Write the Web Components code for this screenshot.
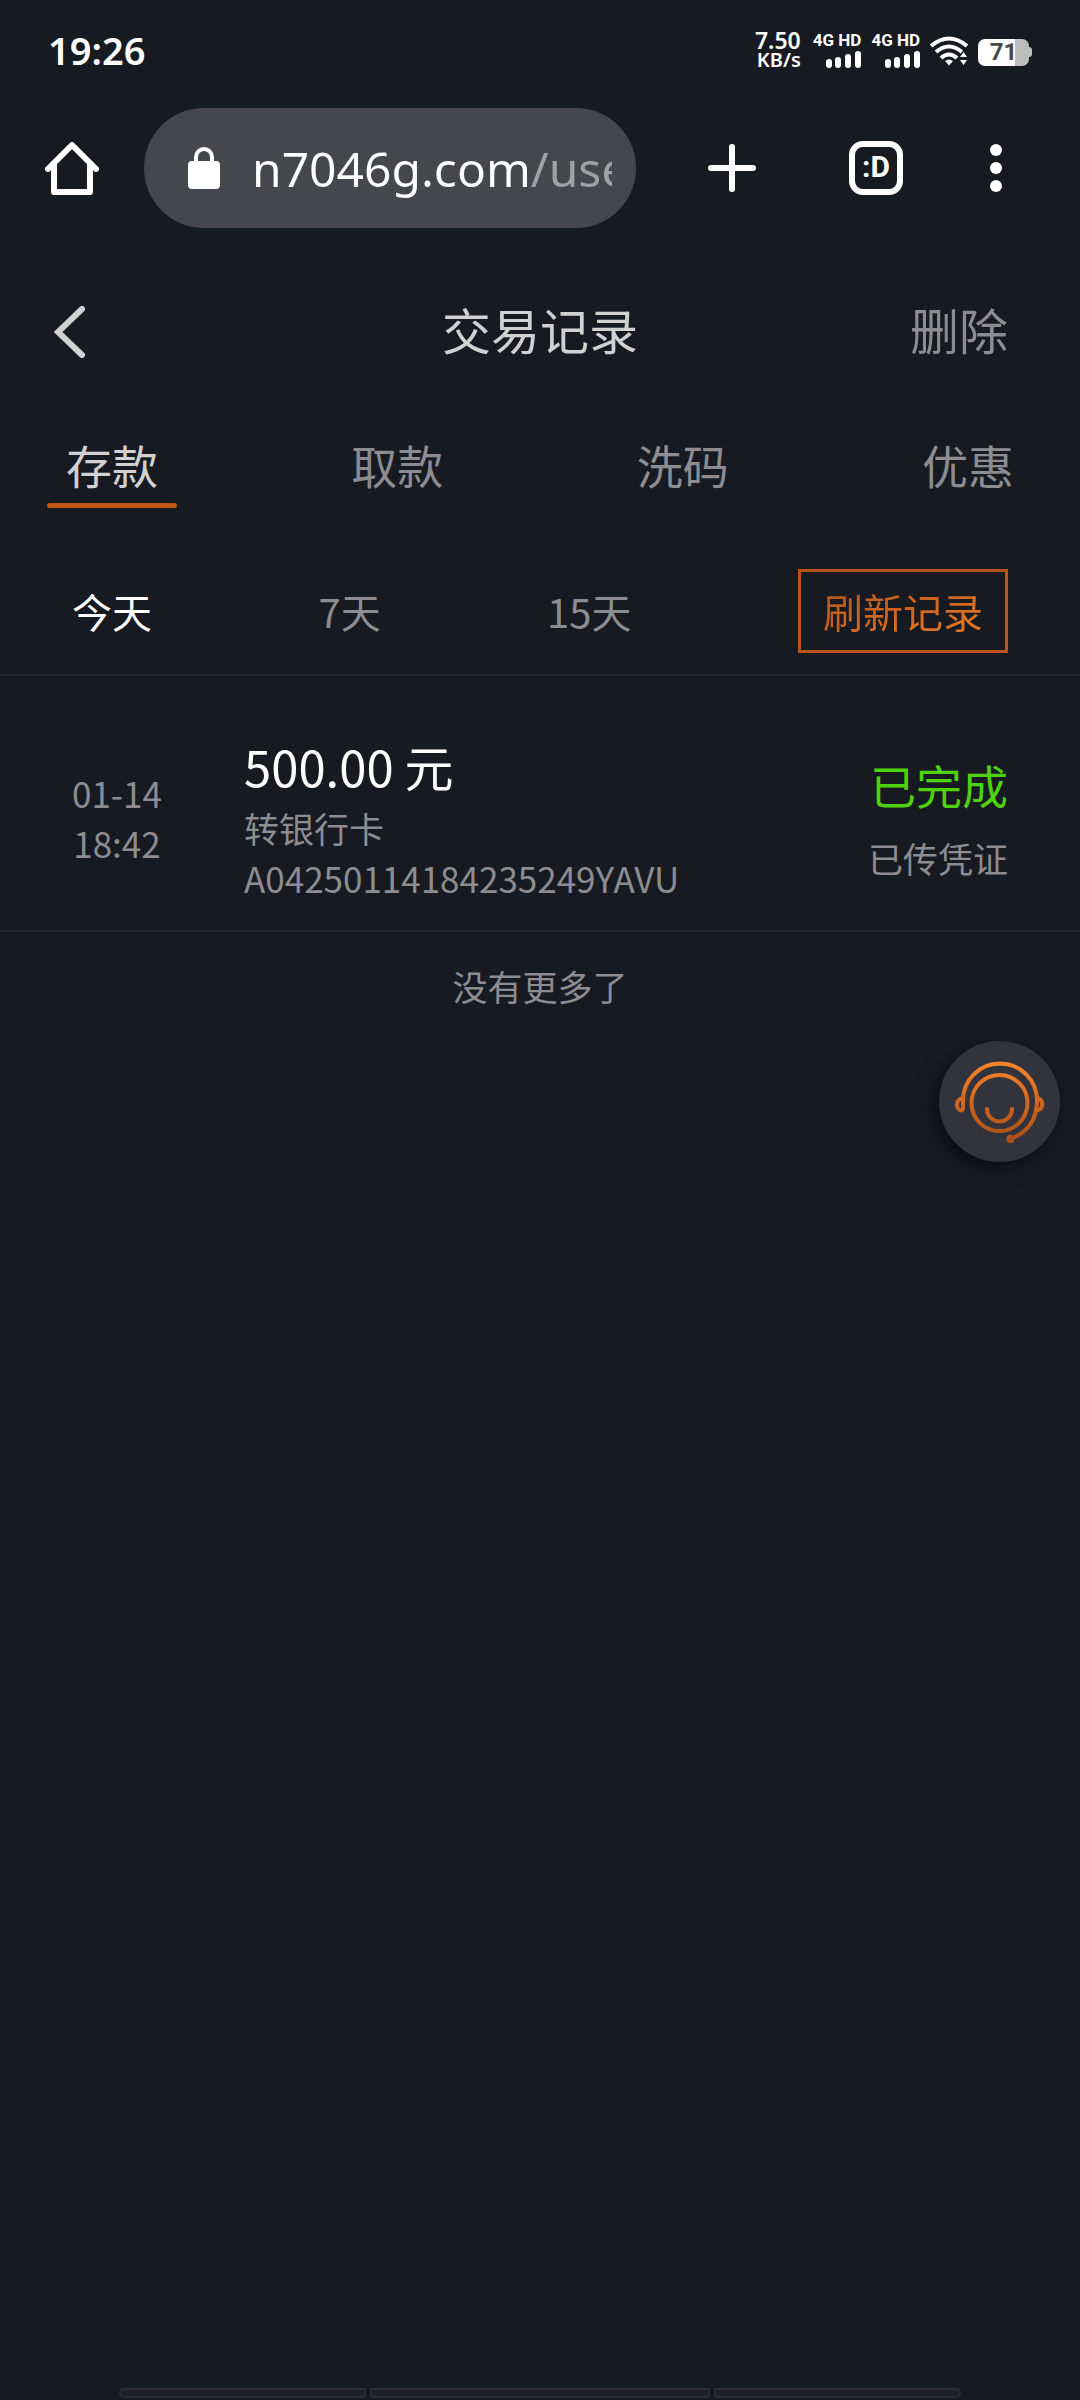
<!DOCTYPE html>
<html lang="zh-CN">
<head>
<meta charset="utf-8">
<meta name="viewport" content="width=device-width, initial-scale=1">
<title>交易记录</title>
<style>
  :root {
    --bg: #181a22;
    --text: #d1d1d1;
    --muted: #8c8c91;
    --line: #262a32;
    --accent: #c25613;
    --ok: #4fd20e;
  }
  html, body {
    margin: 0;
    background: var(--bg);
  }
  body {
    min-height: 100vh;
    display: flex;
    flex-direction: column;
    color: var(--text);
    font-family: "Noto Sans CJK SC", sans-serif;
  }
</style>
</head>
<body>
<status-bar time="19:26" battery="71"></status-bar>
<browser-bar url="n7046g.com/user"></browser-bar>
<page-nav>交易记录<span slot="action">删除</span></page-nav>
<record-tabs items="存款,取款,洗码,优惠"></record-tabs>
<day-filter items="今天,7天,15天">刷新记录</day-filter>
<record-row date="01-14" time="18:42">
  <span slot="amount">500.00 元</span>
  <span slot="method">转银行卡</span>
  <span slot="order">A04250114184235249YAVU</span>
  <span slot="status">已完成</span>
  <span slot="proof">已传凭证</span>
</record-row>
<list-end>没有更多了</list-end>
<bottom-handle></bottom-handle>
<service-button></service-button>

<script>
  const RESET = `
    button {
      margin: 0; padding: 0; border: 0; background: none;
      color: inherit; font: inherit; cursor: pointer;
    }
    svg { display: block; }
  `;

  class BaseElement extends HTMLElement {
    connectedCallback() {
      if (this.shadowRoot) return;
      this.attachShadow({ mode: 'open' });
      this.shadowRoot.innerHTML = `<style>${RESET}</style>${this.render()}`;
    }
    list(name) {
      return (this.getAttribute(name) || '').split(',');
    }
  }

  // one button of the group carries aria-pressed / aria-selected
  function selectable(root, attr) {
    const buttons = root.querySelectorAll(`button[${attr}]`);
    buttons.forEach((b) => b.addEventListener('click', () => {
      buttons.forEach((x) => x.setAttribute(attr, String(x === b)));
    }));
  }

  customElements.define('signal-meter', class extends BaseElement {
    render() {
      return `
        <style>
          :host { display: flex; flex-direction: column; align-items: flex-end; gap: 3px; }
          span { font: bold 17px/16px Roboto, sans-serif; }
        </style>
        <span>4G HD</span>
        <svg width="36" height="17" fill="#fff" aria-hidden="true">
          <rect x="1" y="8" width="6" height="9" rx="3"/>
          <rect x="10" y="6" width="6" height="11" rx="3"/>
          <rect x="20" y="3" width="6" height="14" rx="3"/>
          <rect x="30" y="0" width="6" height="17" rx="3"/>
        </svg>`;
    }
  });

  customElements.define('status-bar', class extends BaseElement {
    render() {
      return `
        <style>
          :host {
            display: flex; align-items: center; gap: 10px;
            height: 68px; padding: 16px 48px 0;
            color: #fff; font-family: "Noto Sans", sans-serif; font-weight: 600;
          }
          time { margin-right: auto; font-size: 38px; line-height: 48px; }
          .speed {
            display: grid; grid-template-rows: 20px 20px;
            text-align: right; font-size: 23px; line-height: 20px; margin-right: 2px;
          }
          .speed small { font-size: 20px; }
          .battery { display: flex; align-items: center; padding-top: 4px; }
          .battery b {
            width: 51px; border-radius: 7px; text-align: center;
            background: linear-gradient(90deg, #fff 72%, #bdbdbd 72%);
            color: #484848; font: bold 24px/27px Roboto, sans-serif;
          }
          .battery::after {
            content: ""; width: 3px; height: 10px;
            border-radius: 0 3px 3px 0; background: #bdbdbd;
          }
        </style>
        <time>${this.getAttribute('time')}</time>
        <div class="speed"><span>7.50</span><small>KB/s</small></div>
        <signal-meter></signal-meter>
        <signal-meter></signal-meter>
        <svg width="38" height="32" viewBox="0 -2 38 32" fill="none" stroke="#fff" stroke-width="4" role="img" aria-label="Wi-Fi">
          <path d="M1 10Q19 -5 37 10"/>
          <path d="M6 16Q19 5 32 16"/>
          <path d="M11 22Q19 15 27 22"/>
          <path d="M19 23.500q2 0 4 1.500l-4 4.500-4-4.500q2-1.500 4-1.500z" fill="#fff" stroke="none"/>
          <path d="M33.500 14l5 8v8h-10v-8z" fill="#181a22" stroke="none"/>
          <path d="M33.500 16l3.500 5h-7zM33.500 29l3.500-5h-7z" fill="#fff" stroke="none"/>
        </svg>
        <div class="battery"><b>${this.getAttribute('battery')}</b></div>`;
    }
  });

  customElements.define('browser-bar', class extends BaseElement {
    render() {
      return `
        <style>
          :host { display: flex; align-items: center; height: 168px; padding-right: 36px; color: #fff; }
          button { flex: none; display: grid; place-items: center; width: 144px; height: 144px; }
          .menu { width: 96px; }
          label {
            flex: 1; min-width: 0; display: flex; align-items: center; gap: 32px;
            height: 120px; box-sizing: border-box; margin-right: 24px; padding: 0 24px 0 44px;
            border-radius: 60px; background: #46474c;
          }
          label svg { flex: none; }
          input {
            flex: 1; min-width: 0; height: 72px; padding: 2px 0 0; border: 0; outline: 0;
            font: 48px/72px "Noto Sans", sans-serif;
            color: transparent; caret-color: #fff;
            background: linear-gradient(90deg, #fff 279px, #a0a1a4 279px);
            -webkit-background-clip: text; background-clip: text;
          }
          .tabs span {
            box-sizing: border-box; width: 54px; height: 54px;
            border: 6px solid #fff; border-radius: 14px;
            font: bold 30px/40px Roboto, sans-serif; text-align: center;
          }
        </style>
        <button aria-label="主页">
          <svg width="54" height="54" fill="none" stroke="#fff" stroke-width="6" stroke-linecap="round" stroke-linejoin="round">
            <path d="M3 28L27 4l24 24"/>
            <path d="M9 23v28h36V23"/>
          </svg>
        </button>
        <label>
          <svg width="32" height="42" aria-hidden="true">
            <rect y="14" width="32" height="28" rx="4" fill="#fff"/>
            <path d="M8 16v-6a8 8 0 0 1 16 0v6" fill="none" stroke="#fff" stroke-width="4"/>
          </svg>
          <input type="text" aria-label="网址" value="${this.getAttribute('url')}">
        </label>
        <button aria-label="新标签页">
          <svg width="48" height="48" stroke="#fff" stroke-width="6" stroke-linecap="round">
            <path d="M24 3v42M3 24h42"/>
          </svg>
        </button>
        <button class="tabs" aria-label="标签页"><span>:D</span></button>
        <button class="menu" aria-label="菜单">
          <svg width="12" height="48" fill="#fff">
            <circle cx="6" cy="6" r="6"/><circle cx="6" cy="24" r="6"/><circle cx="6" cy="42" r="6"/>
          </svg>
        </button>`;
    }
  });

  customElements.define('page-nav', class extends BaseElement {
    render() {
      return `
        <style>
          :host {
            display: grid; grid-template-columns: 1fr auto 1fr; align-items: center;
            height: 150px; padding: 2px 72px 0 54px; font-size: 49px; line-height: 72px;
          }
          h1 { margin: 0 0 0 18px; font: inherit; }
          .back { justify-self: start; padding-top: 6px; }
          .action { justify-self: end; color: var(--muted); }
        </style>
        <button class="back" aria-label="返回">
          <svg width="32" height="52" fill="none" stroke="#d1d1d1" stroke-width="6" stroke-linecap="round">
            <path d="M28 3L4 26l24 23"/>
          </svg>
        </button>
        <h1><slot></slot></h1>
        <button class="action"><slot name="action"></slot></button>`;
    }
  });

  customElements.define('record-tabs', class extends BaseElement {
    connectedCallback() {
      super.connectedCallback();
      selectable(this.shadowRoot, 'aria-selected');
    }
    render() {
      return `
        <style>
          :host { display: block; padding: 28px 47px 0; }
          div { display: flex; justify-content: space-between; }
          button { width: 130px; color: var(--muted); font-size: 46px; line-height: 64px; }
          button::after {
            content: ""; display: block; height: 5px; margin-top: 7px; border-radius: 3px;
          }
          button[aria-selected="true"] { color: var(--text); }
          button[aria-selected="true"]::after { background: var(--accent); }
        </style>
        <div role="tablist">
          ${this.list('items').map((t, i) => `<button role="tab" aria-selected="${i === 0}">${t}</button>`).join('')}
        </div>`;
    }
  });

  customElements.define('day-filter', class extends BaseElement {
    connectedCallback() {
      super.connectedCallback();
      selectable(this.shadowRoot, 'aria-pressed');
    }
    render() {
      return `
        <style>
          :host {
            display: flex; align-items: center; justify-content: space-between;
            padding: 61px 72px 21px; border-bottom: 2px solid var(--line);
            font-size: 40px; line-height: 78px;
          }
          button { color: var(--muted); }
          button[aria-pressed="true"] { color: #fff; }
          .refresh { padding: 0 22px; border: 3px solid #b9541c; }
          .refresh span {
            color: transparent;
            background: linear-gradient(160deg, #b35216, #ec7a28);
            -webkit-background-clip: text; background-clip: text;
          }
        </style>
        ${this.list('items').map((t, i) => `<button aria-pressed="${i === 0}">${t}</button>`).join('')}
        <button class="refresh"><span><slot></slot></span></button>`;
    }
  });

  customElements.define('record-row', class extends BaseElement {
    render() {
      return `
        <style>
          :host {
            display: grid; grid-template-columns: 172px 1fr auto; align-items: center;
            padding: 53px 72px 27px; border-bottom: 2px solid var(--line);
            color: var(--muted); font-size: 35px; line-height: 50px;
          }
          time { display: grid; justify-content: start; justify-items: center; padding-top: 4px; white-space: nowrap; }
          .info > *, .state > * { display: block; }
          .amount { color: #fff; font-size: 49px; line-height: 74px; }
          .state { align-self: start; padding-top: 18px; text-align: right; line-height: 74px; }
          .status { color: var(--ok); font-size: 46px; }
        </style>
        <time>
          <span>${this.getAttribute('date')}</span>
          <span>${this.getAttribute('time')}</span>
        </time>
        <div class="info">
          <div class="amount"><slot name="amount"></slot></div>
          <div><slot name="method"></slot></div>
          <div><slot name="order"></slot></div>
        </div>
        <div class="state">
          <div class="status"><slot name="status"></slot></div>
          <div><slot name="proof"></slot></div>
        </div>`;
    }
  });

  customElements.define('list-end', class extends BaseElement {
    render() {
      return `
        <style>
          :host {
            display: block; padding: 29px 0; text-align: center;
            color: var(--muted); font-size: 35px; line-height: 50px;
          }
        </style>
        <slot></slot>`;
    }
  });

  customElements.define('bottom-handle', class extends BaseElement {
    render() {
      return `
        <style>
          :host { display: flex; gap: 4px; margin: auto 11% 2px; }
          i {
            flex: 8; box-sizing: border-box; height: 10px;
            border: 2px solid #292a32; background: #1f2124;
          }
          i:nth-of-type(1) { border-radius: 5px 0 0 5px; }
          i:nth-of-type(2) { flex: 11; }
          i:nth-of-type(3) { border-radius: 0 5px 5px 0; }
        </style>
        <i></i><i></i><i></i>`;
    }
  });

  customElements.define('service-button', class extends BaseElement {
    render() {
      return `
        <style>
          :host { position: fixed; top: 1041px; right: 20px; }
          button {
            display: block; border-radius: 50%; background: #32333c;
            box-shadow: -5px 6px 18px rgba(0, 0, 0, .5);
          }
        </style>
        <button aria-label="在线客服">
          <svg width="121" height="121" viewBox="0 0 121 121" fill="none" stroke="url(#g)" stroke-width="4" stroke-linecap="round" stroke-linejoin="round">
            <defs>
              <linearGradient id="g" gradientUnits="userSpaceOnUse" x1="0" y1="22" x2="0" y2="100">
                <stop offset="0" stop-color="#f8842a"/>
                <stop offset=".5" stop-color="#d2661c"/>
                <stop offset="1" stop-color="#a8501a"/>
              </linearGradient>
            </defs>
            <circle cx="60.500" cy="62" r="28"/>
            <path d="M24 68V59.500a37 37 0 0 1 74 0c0 20-11 32-25 38"/>
            <path d="M24 57c-8 1-8 12-1 12.500"/>
            <path d="M98 57c7 1 7 11 0 12.500"/>
            <path d="M48 68a12.500 12.500 0 0 0 25 0"/>
            <circle cx="71.500" cy="98" r="2.500" stroke-width="3.500" fill="#a8501a"/>
          </svg>
        </button>`;
    }
  });
</script>
</body>
</html>
